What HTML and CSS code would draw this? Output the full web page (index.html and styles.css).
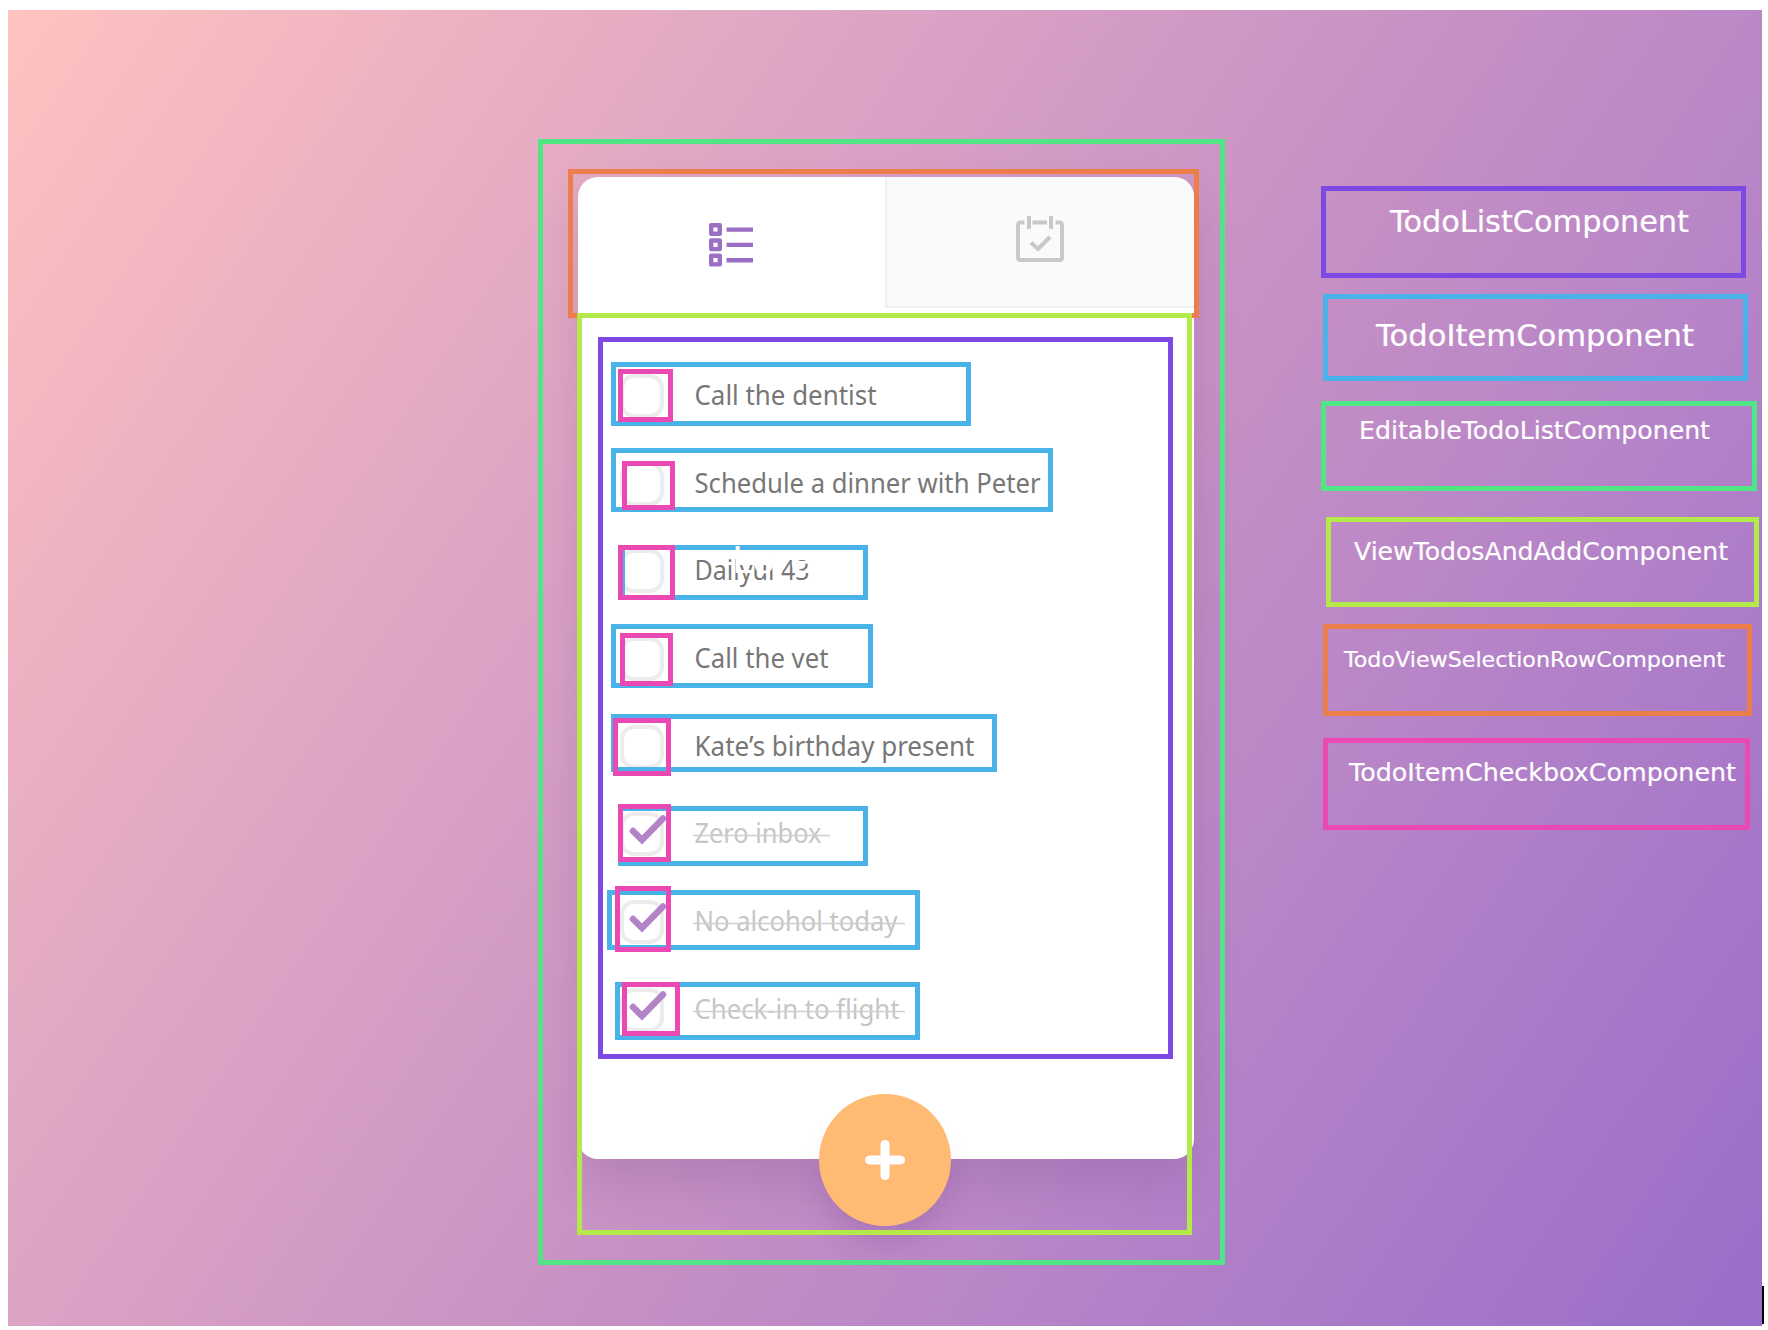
FILE: index.html
```html
<!DOCTYPE html>
<html lang="en">
<head>
<meta charset="utf-8">
<title>Todo component breakdown</title>
<link rel="stylesheet" href="styles.css">
</head>
<body>
<main class="page">
  <div class="backdrop">
    <section class="card">
      <nav class="tabs">
        <div class="tab tab-active">
          <svg class="list-icon" viewBox="0 0 44 44" width="44" height="44" fill="none" stroke="#9b6fc6" stroke-width="4.4">
            <path d="M2.2 2.2h8.6v8.6H2.2zM2.2 17.5h8.6v8.6H2.2zM2.2 32.8h8.6v8.6H2.2z" stroke-linejoin="round"/>
            <path d="M17.5 6.6H44M17.5 21.9H44M17.5 37.2H44"/>
          </svg>
        </div>
        <div class="tab tab-muted">
          <svg class="calendar-icon" viewBox="0 0 48 46" width="48" height="46" fill="none" stroke="#c8c8c8" stroke-width="4">
            <path d="M8.5 6.5H4.5Q2 6.5 2 9V41.5Q2 44 4.5 44H43.5Q46 44 46 41.5V9Q46 6.5 43.5 6.5H39.5M16.5 6.5H31M13 0V13M35 0V13"/>
            <path d="M15 26.5L22 33L34 21"/>
          </svg>
        </div>
      </nav>
      <ul class="todos">
        <li class="todo"><span class="box"></span><svg class="label" width="360" height="40"><text x="1.5" y="28.5" textLength="182" lengthAdjust="spacingAndGlyphs">Call the dentist</text></svg></li>
        <li class="todo"><span class="box"></span><svg class="label" width="360" height="40"><text x="1.5" y="28.5" textLength="346" lengthAdjust="spacingAndGlyphs">Schedule a dinner with Peter</text></svg></li>
        <li class="todo"><span class="box"></span><svg class="label" width="360" height="40"><text x="1.5" y="28.5" textLength="115" lengthAdjust="spacingAndGlyphs">Dailyui 43</text></svg></li>
        <li class="todo"><span class="box"></span><svg class="label" width="360" height="40"><text x="1.5" y="28.5" textLength="134" lengthAdjust="spacingAndGlyphs">Call the vet</text></svg></li>
        <li class="todo"><span class="box"></span><svg class="label" width="360" height="40"><text x="1.5" y="28.5" textLength="280" lengthAdjust="spacingAndGlyphs">Kate’s birthday present</text></svg></li>
        <li class="todo done"><span class="box"><svg class="check" viewBox="0 0 40 32" width="40" height="32"><path d="M5 17L14 26L35 4.5"/></svg></span><svg class="label" width="360" height="40"><text x="1.5" y="28.5" textLength="127" lengthAdjust="spacingAndGlyphs">Zero inbox</text><path d="M0 21.5H137"/></svg></li>
        <li class="todo done"><span class="box"><svg class="check" viewBox="0 0 40 32" width="40" height="32"><path d="M5 17L14 26L35 4.5"/></svg></span><svg class="label" width="360" height="40"><text x="1.5" y="28.5" textLength="203" lengthAdjust="spacingAndGlyphs">No alcohol today</text><path d="M0 21.5H212"/></svg></li>
        <li class="todo done"><span class="box"><svg class="check" viewBox="0 0 40 32" width="40" height="32"><path d="M5 17L14 26L35 4.5"/></svg></span><svg class="label" width="360" height="40"><text x="1.5" y="28.5" textLength="205" lengthAdjust="spacingAndGlyphs">Check-in to flight</text><path d="M0 21.5H212"/></svg></li>
      </ul>
      <div class="add">
        <svg viewBox="0 0 40 40" width="40" height="40" stroke="#fff" stroke-width="9" stroke-linecap="round"><path d="M20 4.5V35.5M4.5 20H35.5"/></svg>
      </div>
    </section>
  </div>

  <div class="mark green m-editable"></div>
  <div class="mark orange m-tabs"></div>
  <div class="mark lime m-view"></div>
  <div class="mark violet m-list"></div>
  <div class="mark blue m-item1"></div>
  <div class="mark blue m-item2"></div>
  <div class="mark blue m-item3"></div>
  <div class="mark blue m-item4"></div>
  <div class="mark blue m-item5"></div>
  <div class="mark blue m-item6"></div>
  <div class="mark blue m-item7"></div>
  <div class="mark blue m-item8"></div>
  <div class="mark pink m-check1"></div>
  <div class="mark pink m-check2"></div>
  <div class="mark pink m-check3"></div>
  <div class="mark pink m-check4"></div>
  <div class="mark pink m-check5"></div>
  <div class="mark pink m-check6"></div>
  <div class="mark pink m-check7"></div>
  <div class="mark pink m-check8"></div>
  <div class="stray">Lorem</div>

  <div class="mark violet legend l-list"><svg width="415" height="82"><text x="64" y="41" font-size="30" textLength="299" lengthAdjust="spacingAndGlyphs">TodoListComponent</text></svg></div>
  <div class="mark blue legend l-item"><svg width="415" height="77"><text x="48" y="47" font-size="30" textLength="318" lengthAdjust="spacingAndGlyphs">TodoItemComponent</text></svg></div>
  <div class="mark green legend l-editable"><svg width="426" height="80"><text x="33" y="33" font-size="25" textLength="351" lengthAdjust="spacingAndGlyphs">EditableTodoListComponent</text></svg></div>
  <div class="mark lime legend l-view"><svg width="423" height="80"><text x="23" y="38" font-size="25" textLength="374" lengthAdjust="spacingAndGlyphs">ViewTodosAndAddComponent</text></svg></div>
  <div class="mark orange legend l-tabs"><svg width="419" height="82"><text x="16" y="38" font-size="22" textLength="381" lengthAdjust="spacingAndGlyphs">TodoViewSelectionRowComponent</text></svg></div>
  <div class="mark pink legend l-check"><svg width="417" height="82"><text x="21" y="38" font-size="25" textLength="387" lengthAdjust="spacingAndGlyphs">TodoItemCheckboxComponent</text></svg></div>
  <div class="caret"></div>
</main>
</body>
</html>
```
FILE: styles.css
```css
* { box-sizing: border-box; }
body { margin: 0; background: #fff; }
.page {
  position: relative;
  width: 1768px;
  height: 1330px;
  padding: 10px 6px 4px 8px;
  overflow: hidden;
}
.backdrop {
  display: flex;
  align-items: flex-start;
  height: 1316px;
  padding: 167px 0 0 570px;
  background: linear-gradient(124deg, #ffc3c0 0%, #f0b5c1 14%, #e0a8c4 29%, #cb94c4 51%, #b986c7 69%, #996dca 100%);
}
.card {
  display: flex;
  flex-direction: column;
  width: 616px;
  height: 982px;
  border-radius: 20px;
  background: #fff;
  box-shadow: 0 24px 44px rgba(90, 45, 115, .17);
}
.tabs { display: flex; flex: none; height: 131px; }
.tab { display: flex; padding-top: 46px; padding-left: 131px; width: 307px; }
.tab-muted {
  width: 309px;
  padding: 39px 0 0 129px;
  background: #fafafa;
  border-left: 2px solid #efefef;
  border-bottom: 2px solid #efefef;
  border-top-right-radius: 20px;
}
.todos {
  flex: none;
  height: 785px;
  margin: 0;
  padding: 44px 0 0 42px;
  list-style: none;
}
.todo { display: flex; align-items: center; height: 87.7px; gap: 29px; }
.box {
  flex: none;
  display: flex;
  width: 44px;
  height: 44px;
  border: 4px solid #ececec;
  border-radius: 14px;
}
.check {
  flex: none;
  margin: -2px 0 0 4px;
  fill: none;
  stroke: #b383c7;
  stroke-width: 6.5px;
  stroke-linecap: round;
}
.label { flex: none; font-family: "Noto Sans", sans-serif; font-size: 27px; fill: #777; }
.done .label { fill: #c6c6c6; stroke-width: 1.5px; }
.done .label path { stroke: #cfcfcf; }
.add {
  display: flex;
  align-items: center;
  justify-content: center;
  flex: none;
  width: 132px;
  height: 132px;
  margin: 1px 0 0 241px;
  border-radius: 50%;
  background: #ffba74;
  box-shadow: 0 24px 28px -6px rgba(100, 50, 130, .2);
}

/* Component outlines placed freely over the mockup */
.mark { position: absolute; border: 5px solid; }
.green { border-color: #50e585; }
.orange { border-color: #eb7e4b; }
.lime { border-color: #b3ea49; }
.violet { border-color: #7d49e5; }
.blue { border-color: #49b2e8; }
.pink { border-color: #ea49b3; }

.m-editable { left: 538px; top: 139px; width: 687px; height: 1126px; }
.m-tabs { left: 568px; top: 169px; width: 631px; height: 149px; }
.m-view { left: 577px; top: 313px; width: 615px; height: 922px; }
.m-list { left: 598px; top: 337px; width: 575px; height: 722px; }
.m-item1 { left: 611px; top: 362px; width: 360px; height: 64px; }
.m-item2 { left: 611px; top: 448px; width: 442px; height: 64px; }
.m-item3 { left: 620px; top: 545px; width: 248px; height: 55px; }
.m-item4 { left: 611px; top: 624px; width: 262px; height: 64px; }
.m-item5 { left: 611px; top: 714px; width: 386px; height: 58px; }
.m-item6 { left: 618px; top: 806px; width: 250px; height: 60px; }
.m-item7 { left: 607px; top: 890px; width: 313px; height: 60px; }
.m-item8 { left: 615px; top: 982px; width: 305px; height: 58px; }
.m-check1 { left: 618px; top: 369px; width: 55px; height: 53px; }
.m-check2 { left: 622px; top: 461px; width: 53px; height: 49px; }
.m-check3 { left: 618px; top: 545px; width: 57px; height: 55px; }
.m-check4 { left: 620px; top: 633px; width: 53px; height: 53px; }
.m-check5 { left: 613px; top: 718px; width: 58px; height: 58px; }
.m-check6 { left: 618px; top: 804px; width: 53px; height: 58px; }
.m-check7 { left: 615px; top: 886px; width: 56px; height: 66px; }
.m-check8 { left: 622px; top: 982px; width: 58px; height: 54px; }

.stray {
  position: absolute;
  left: 732px;
  top: 538px;
  font: 37.5px/44px "DejaVu Sans", Verdana, sans-serif;
  color: #fff;
}

.legend { font-family: "DejaVu Sans", Verdana, sans-serif; }
.legend svg { display: block; fill: #fff; stroke: #fff; stroke-width: .2px; }
.l-list { left: 1321px; top: 186px; width: 425px; height: 92px; }
.l-item { left: 1323px; top: 294px; width: 425px; height: 87px; }
.l-editable { left: 1321px; top: 401px; width: 436px; height: 90px; }
.l-view { left: 1326px; top: 517px; width: 433px; height: 90px; }
.l-tabs { left: 1323px; top: 624px; width: 429px; height: 92px; }
.l-check { left: 1323px; top: 738px; width: 427px; height: 92px; }

.caret { position: absolute; left: 1762px; top: 1286px; width: 2px; height: 38px; background: #000; }
```
